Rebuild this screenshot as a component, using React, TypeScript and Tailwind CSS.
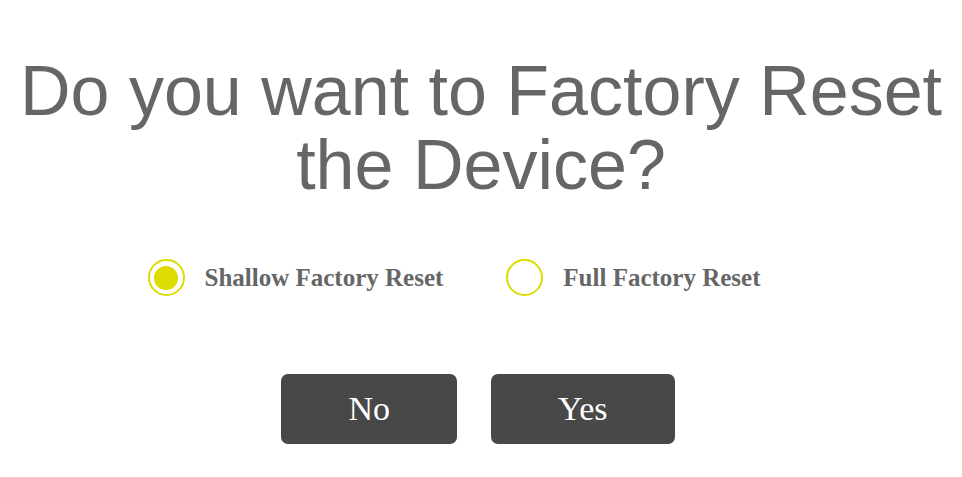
import React, { useState } from 'react';

type Mode = 'shallow' | 'full';

function Radio({ checked, label, onClick }: { checked: boolean; label: string; onClick: () => void }) {
  return (
    <button onClick={onClick} className="flex items-center gap-[20px] cursor-pointer">
      <span className="flex items-center justify-center w-[37px] h-[37px] rounded-full border-2 border-[#dcdc00]">
        {checked && <span className="w-[24px] h-[24px] rounded-full bg-[#dcdc00]"></span>}
      </span>
      <span className="font-['Liberation_Serif',serif] font-bold text-[25px] text-[#666666]">{label}</span>
    </button>
  );
}

export default function App() {
  const [mode, setMode] = useState<Mode>('shallow');

  return (
    <div className="w-full h-[477px] bg-white flex flex-col items-center">
      <h1 className="mt-[54px] text-center font-['Liberation_Sans',Arial,sans-serif] text-[70px] leading-[74px] text-[#666666]">
        Do you want to Factory Reset
        <br />
        the Device?
      </h1>

      <div className="mt-[57px] pl-[4px] pr-[58px] flex items-center gap-[63px]">
        <Radio checked={mode === 'shallow'} label="Shallow Factory Reset" onClick={() => setMode('shallow')} />
        <Radio checked={mode === 'full'} label="Full Factory Reset" onClick={() => setMode('full')} />
      </div>

      <div className="mt-[77px] mr-[6px] flex gap-[34px]">
        <button className="h-[70px] px-[67px] rounded-[7px] bg-[#484848] text-white font-['Liberation_Serif',serif] text-[34px]">
          No
        </button>
        <button className="h-[70px] px-[67px] rounded-[7px] bg-[#484848] text-white font-['Liberation_Serif',serif] text-[34px]">
          Yes
        </button>
      </div>
    </div>
  );
}
